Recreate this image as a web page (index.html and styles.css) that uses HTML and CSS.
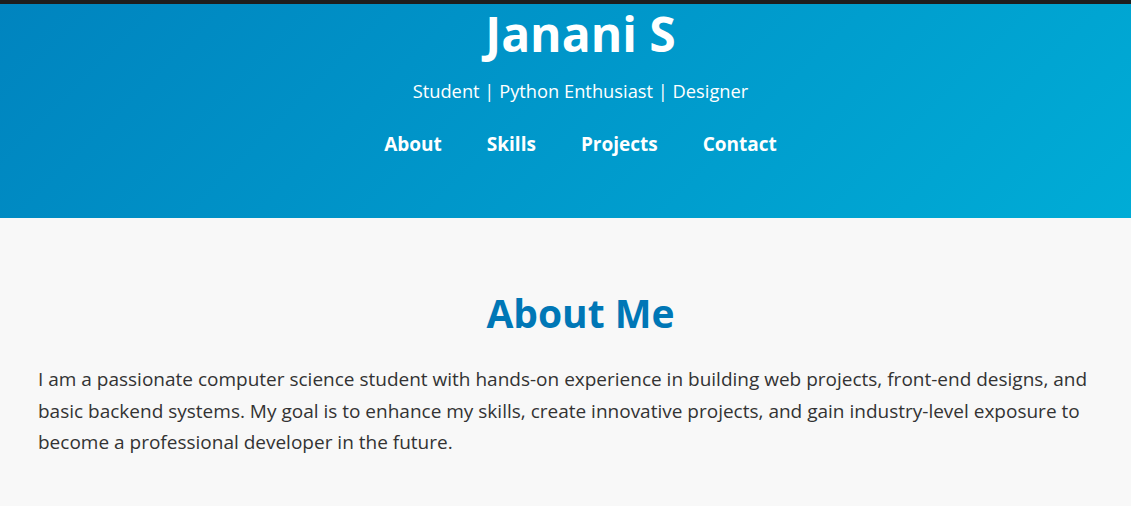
FILE: index.html
```html
<!DOCTYPE html>
<html lang="en">
<head>
<meta charset="utf-8">
<title>Janani S</title>
<link rel="stylesheet" href="styles.css">
</head>
<body>
<div class="topbar"></div>
<header class="hero">
  <h1 class="hero-name">Janani S</h1>
  <p class="hero-tagline">Student | Python Enthusiast | Designer</p>
  <nav class="hero-nav">
    <a href="#about">About</a>
    <a href="#skills">Skills</a>
    <a href="#projects">Projects</a>
    <a href="#contact">Contact</a>
  </nav>
</header>
<main>
  <section class="about" id="about">
    <h2 class="section-title">About Me</h2>
    <p class="about-text">I am a passionate computer science student with hands-on experience in building web projects, front-end designs, and basic backend systems. My goal is to enhance my skills, create innovative projects, and gain industry-level exposure to become a professional developer in the future.</p>
  </section>
</main>
</body>
</html>
```
FILE: styles.css
```css
* { box-sizing: border-box; }
html, body {
  margin: 0;
  padding: 0;
}
body {
  background: #f8f8f8;
  font-family: "Open Sans", "Noto Sans", sans-serif;
  color: #333;
}
.topbar {
  height: 4px;
  background: #1e1e1e;
}
.hero {
  height: 214px;
  background: linear-gradient(135deg, #0084bf, #00acd6);
  color: #fff;
  text-align: center;
  padding: 0 0 0 30px;
}
.hero-name {
  margin: 0;
  font-size: 48px;
  font-weight: 700;
  line-height: 60px;
}
.hero-tagline {
  margin: 12px 0 0;
  font-size: 18.3px;
  line-height: 30px;
}
.hero-nav {
  display: flex;
  justify-content: center;
  gap: 45px;
  margin-top: 25px;
}
.hero-nav a {
  color: #fff;
  text-decoration: none;
  font-weight: 700;
  font-size: 19px;
  line-height: 26px;
}
.about {
  padding: 72px 8px 40px 38px;
}
.section-title {
  margin: 0;
  text-align: center;
  color: #0077b6;
  font-size: 39px;
  line-height: 46px;
  font-weight: 700;
}
.about-text {
  margin: 28px 0 0;
  font-size: 19px;
  line-height: 31.5px;
}
```
